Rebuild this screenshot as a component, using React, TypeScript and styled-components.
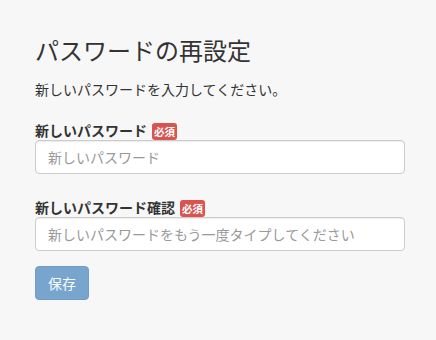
import React from "react";
import styled, { createGlobalStyle } from "styled-components";

const GlobalStyle = createGlobalStyle`
  html, body {
    margin: 0;
    padding: 0;
    background: #f7f7f7;
  }
  body {
    font-family: "Noto Sans CJK JP", "Noto Sans", sans-serif;
    font-size: 14px;
    line-height: 1.42857;
    color: #333;
  }
  * {
    box-sizing: border-box;
  }
`;

const Page = styled.div`
  padding: 37px 31px 40px 35px;
`;

const Title = styled.h3`
  margin: 0 0 16px;
  font-size: 24px;
  font-weight: 400;
  line-height: 1.1;
  color: #333;
`;

const Lead = styled.p`
  margin: 0 0 20px;
`;

const Form = styled.form`
  display: flex;
  flex-direction: column;
  width: 370px;
`;

const Group = styled.div`
  display: flex;
  flex-direction: column;
  margin-bottom: ${({ $last }: { $last?: boolean }) => ($last ? "15px" : "22px")};
`;

const Label = styled.label`
  display: flex;
  align-items: flex-end;
  gap: 5px;
  font-weight: 700;
  height: 21px;
  line-height: 20px;
`;

const Required = styled.span`
  display: inline-block;
  height: 17px;
  padding: 1px 2px;
  font-size: 10.5px;
  line-height: 15px;
  font-weight: 700;
  color: #fff;
  background: #d9534f;
  border-radius: 3px;
`;

const Input = styled.input`
  height: 34px;
  padding: 6px 12px;
  font-family: inherit;
  font-size: 14px;
  color: #555;
  background: #fff;
  border: 1px solid #ccc;
  border-radius: 4px;
  box-shadow: inset 0 1px 1px rgba(0, 0, 0, 0.075);
  outline: none;

  &::placeholder {
    color: #999;
  }
`;

const SaveButton = styled.button`
  align-self: flex-start;
  height: 34px;
  padding: 6px 12px;
  font-family: inherit;
  font-size: 14px;
  line-height: 20px;
  color: #fff;
  background: #337ab7;
  border: 1px solid #2e6da4;
  border-radius: 4px;
  opacity: 0.65;
  cursor: not-allowed;
`;

const fields = [
  { label: "新しいパスワード", placeholder: "新しいパスワード" },
  { label: "新しいパスワード確認", placeholder: "新しいパスワードをもう一度タイプしてください" },
];

const App: React.FC = () => {
  return (
    <>
      <GlobalStyle />
      <Page>
        <Title>パスワードの再設定</Title>
        <Lead>新しいパスワードを入力してください。</Lead>
        <Form onSubmit={(e) => e.preventDefault()}>
          {fields.map((field, index) => (
            <Group key={index} $last={index === fields.length - 1}>
              <Label>
                {field.label}
                <Required>必須</Required>
              </Label>
              <Input type="password" placeholder={field.placeholder} />
            </Group>
          ))}
          <SaveButton type="submit" disabled>
            保存
          </SaveButton>
        </Form>
      </Page>
    </>
  );
};

export default App;
